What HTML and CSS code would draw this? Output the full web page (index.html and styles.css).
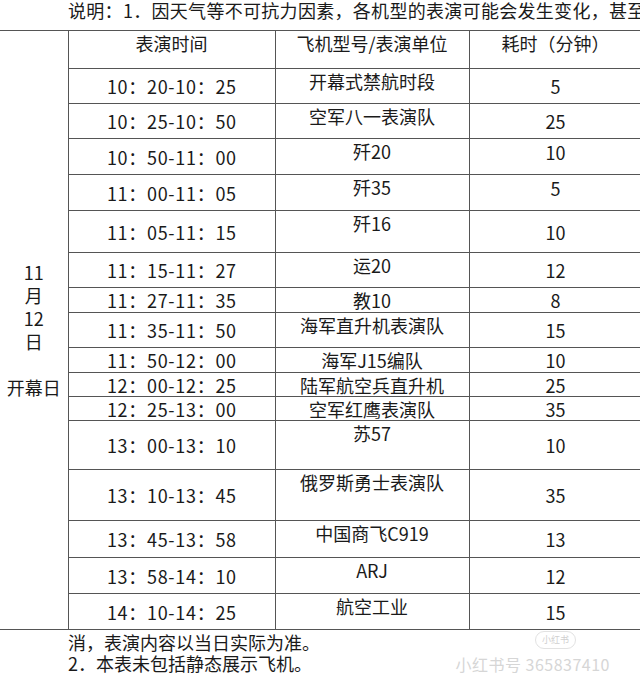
FILE: index.html
```html
<!DOCTYPE html>
<html lang="zh-CN">
<head>
<meta charset="utf-8">
<title>表演时间表</title>
<link rel="stylesheet" href="styles.css">
</head>
<body>
<div class="page">
  <p class="note-top">说明：1．因天气等不可抗力因素，各机型的表演可能会发生变化，甚至</p>
  <table class="sched">
    <colgroup>
      <col class="c-date">
      <col class="c-time">
      <col class="c-unit">
      <col class="c-dur">
    </colgroup>
    <tr class="r38 hdr">
      <td class="date" rowspan="17">
        <div>11</div><div>月</div><div>12</div><div>日</div><div class="blank">&nbsp;</div><div>开幕日</div>
      </td>
      <th>表演时间</th><th>飞机型号/表演单位</th><th>耗时（分钟）</th>
    </tr>
    <tr class="r35"><td class="time">10：20-10：25</td><td class="unit">开幕式禁航时段</td><td class="dur">5</td></tr>
    <tr class="r35"><td class="time">10：25-10：50</td><td class="unit">空军八一表演队</td><td class="dur">25</td></tr>
    <tr class="r36"><td class="time">10：50-11：00</td><td class="unit">歼20</td><td class="dur top">10</td></tr>
    <tr class="r36"><td class="time">11：00-11：05</td><td class="unit">歼35</td><td class="dur top">5</td></tr>
    <tr class="r42"><td class="time">11：05-11：15</td><td class="unit">歼16</td><td class="dur">10</td></tr>
    <tr class="r35"><td class="time">11：15-11：27</td><td class="unit">运20</td><td class="dur">12</td></tr>
    <tr class="r25"><td class="time">11：27-11：35</td><td class="unit">教10</td><td class="dur">8</td></tr>
    <tr class="r35"><td class="time">11：35-11：50</td><td class="unit">海军直升机表演队</td><td class="dur">15</td></tr>
    <tr class="r25"><td class="time">11：50-12：00</td><td class="unit">海军J15编队</td><td class="dur">10</td></tr>
    <tr class="r23"><td class="time">12：00-12：25</td><td class="unit">陆军航空兵直升机</td><td class="dur">25</td></tr>
    <tr class="r24"><td class="time">12：25-13：00</td><td class="unit">空军红鹰表演队</td><td class="dur">35</td></tr>
    <tr class="r49"><td class="time">13：00-13：10</td><td class="unit">苏57</td><td class="dur">10</td></tr>
    <tr class="r51"><td class="time">13：10-13：45</td><td class="unit">俄罗斯勇士表演队</td><td class="dur">35</td></tr>
    <tr class="r37"><td class="time">13：45-13：58</td><td class="unit">中国商飞C919</td><td class="dur">13</td></tr>
    <tr class="r36"><td class="time">13：58-14：10</td><td class="unit">ARJ</td><td class="dur">12</td></tr>
    <tr class="r36"><td class="time">14：10-14：25</td><td class="unit">航空工业</td><td class="dur">15</td></tr>
  </table>
  <div class="note-bottom">
    <div>消，表演内容以当日实际为准。</div>
    <div>2．本表未包括静态展示飞机。</div>
  </div>
  <div class="wm">
    <span class="wm-logo">小红书</span>
    <span class="wm-text">小红书号 365837410</span>
  </div>
</div>
</body>
</html>
```

FILE: styles.css
```css
html, body {
  margin: 0;
  padding: 0;
  background: #fff;
}

body {
  width: 640px;
  height: 699px;
  overflow: hidden;
  font-family: "Noto Sans CJK SC", "Noto Sans", sans-serif;
  color: #1a1a1a;
}

.page {
  position: relative;
  width: 640px;
  height: 699px;
  overflow: hidden;
}

.note-top {
  margin: 0;
  height: 30px;
  padding-left: 68px;
  font-size: 18px;
  line-height: 20px;
  letter-spacing: 0.3px;
  white-space: nowrap;
}

.sched {
  border-collapse: collapse;
  table-layout: fixed;
  width: 642px;
  font-size: 18px;
}

.c-date { width: 68px; }
.c-time { width: 207px; }
.c-unit { width: 194px; }
.c-dur  { width: 173px; }

.sched th,
.sched td {
  border: 1px solid #555;
  padding: 0;
  text-align: center;
  font-weight: 400;
  line-height: 22px;
  white-space: nowrap;
}

.sched th {
  vertical-align: top;
  padding-top: 1px;
}

.sched .date {
  border-left: none;
  vertical-align: middle;
  line-height: 23px;
}

.sched .time {
  vertical-align: middle;
  letter-spacing: 0.7px;
  text-indent: 0.7px;
}

.sched .unit {
  vertical-align: top;
  padding-top: 1px;
}

.sched .dur {
  vertical-align: middle;
}

.sched .dur.top {
  vertical-align: top;
  padding-top: 2px;
}

.r23 { height: 23px; }
.r24 { height: 24px; }
.r25 { height: 25px; }
.r35 { height: 35px; }
.r36 { height: 36px; }
.r37 { height: 37px; }
.r38 { height: 38px; }
.r42 { height: 42px; }
.r49 { height: 49px; }
.r51 { height: 51px; }

.note-bottom {
  padding-left: 68px;
  padding-top: 2px;
  font-size: 18px;
  line-height: 21px;
  white-space: nowrap;
}

.wm {
  position: absolute;
  left: 430px;
  top: 631px;
  width: 180px;
  display: flex;
  flex-direction: column;
  align-items: flex-end;
  gap: 5px;
  color: #d6d6d6;
}

.wm-logo {
  margin-right: 34px;
  padding: 0 6px;
  height: 16px;
  line-height: 16px;
  border: 1px solid #e2e2e2;
  border-radius: 9px;
  font-size: 9px;
  color: #d0d0d0;
}

.wm-text {
  font-size: 16px;
  line-height: 20px;
  letter-spacing: 0.5px;
  white-space: nowrap;
}
```
